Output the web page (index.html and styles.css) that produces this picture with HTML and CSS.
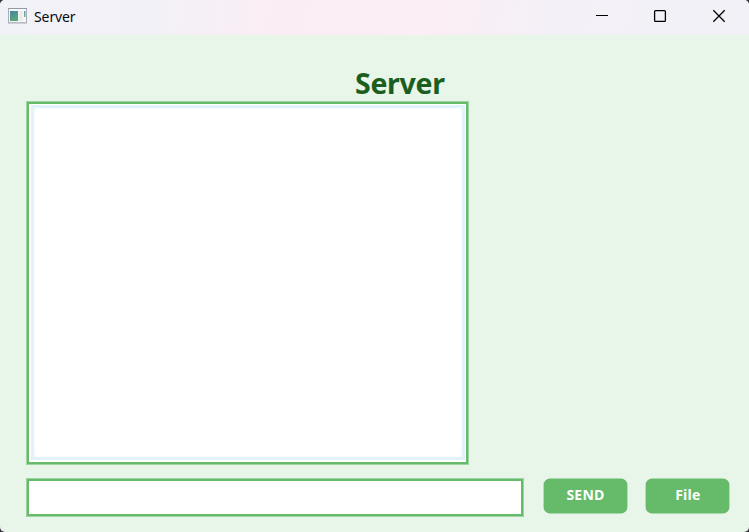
FILE: index.html
```
<!DOCTYPE html>
<html lang="en">
<head>
<meta charset="utf-8">
<title>Server</title>
<link rel="stylesheet" href="styles.css">
</head>
<body>
<div class="window">
  <header class="titlebar">
    <svg class="app-icon" width="20" height="16" viewBox="0 0 20 16">
      <defs><linearGradient id="pane" x1="0" y1="0" x2="0.4" y2="1"><stop offset="0" stop-color="#4a80a0"/><stop offset="1" stop-color="#58a878"/></linearGradient></defs>
      <rect x="0.5" y="0.5" width="18" height="14.2" fill="#f7f7f7" stroke="#a9adb5"/>
      <path d="M0 .5h19" stroke="#9299aa"/>
      <rect x="2" y="3" width="8" height="10" fill="url(#pane)"/>
      <rect x="11" y="3" width="4" height="10" fill="#ececec"/>
      <rect x="16" y="3" width="1.5" height="6" fill="url(#pane)" opacity=".85"/>
      <path d="M0 15.5h19" stroke="#cfd0d6"/>
    </svg>
    <span class="caption">Server</span>
    <svg class="controls" width="130" height="14" viewBox="0 0 130 14" fill="none" stroke="#000">
      <path d="M0 6.5h12" stroke-width="1.1"/>
      <rect x="58.6" y="1.6" width="10.8" height="10.8" rx="1" stroke-width="1.3"/>
      <path d="M117.3 1.3l11.4 11.4M128.7 1.3l-11.4 11.4" stroke-width="1.3"/>
    </svg>
  </header>
  <main class="content">
    <h1 class="heading">Server</h1>
    <div class="log"><div class="log-inner"></div></div>
    <div class="compose">
      <input class="message" type="text" aria-label="Message">
      <button class="btn">SEND</button>
      <button class="btn">File</button>
    </div>
  </main>
</div>
</body>
</html>
```
FILE: styles.css
```
* { box-sizing: border-box; }
body {
  margin: 0;
  background: #34323b;
  font-family: "Noto Sans", "Open Sans", sans-serif;
}
.window {
  width: 749px;
  height: 532px;
  overflow: hidden;
  border-radius: 5px;
  background: #e8f5e9;
}
.titlebar {
  display: flex;
  height: 35px;
  padding: 8px 0 0 8px;
  align-items: flex-start;
  background: linear-gradient(100deg, #f1f2f8 0%, #f2f1f7 20%, #faeef4 37%, #fbeef4 57%, #f4f0f7 73%, #f2f1f8 100%);
}
.app-icon { display: block; }
.caption {
  margin: -1px 0 0 6px;
  font-size: 14px;
  line-height: 20px;
  letter-spacing: -0.1px;
  color: #0a0a0a;
}
.controls {
  display: block;
  margin: 1px 23px 0 auto;
}
.content { padding: 30px 19px 0 27px; }
.heading {
  margin: 0;
  padding-left: 328px;
  font-size: 28.5px;
  line-height: 37px;
  font-weight: 700;
  letter-spacing: -0.3px;
  color: #1b5e20;
}
.log {
  width: 441px;
  height: 362px;
  padding: 1px 1px 2px 2px;
  border: 2px solid #66bb6a;
  background: #fff;
  box-shadow: 0 0 0 1px #9ed4a1;
}
.log-inner {
  height: 100%;
  border: 3px solid #e1f2f9;
  background: #fff;
  box-shadow: inset 0 0 3px #f0f3f5;
}
.compose {
  display: flex;
  align-items: flex-start;
  margin-top: 15px;
}
.message {
  width: 496px;
  height: 37px;
  margin: 0 21px 0 0;
  padding: 4px;
  border: 2px solid #66bb6a;
  border-radius: 0;
  outline: 0;
  background: #fff;
  box-shadow: 0 0 0 1px #9ed4a1;
  font: 14px "Noto Sans", sans-serif;
}
.btn {
  width: 83px;
  height: 34px;
  margin: 0 19.4px 0 0;
  padding: 0 0 2px;
  flex: none;
  border: 0;
  border-radius: 6px;
  background: #66bb6a;
  box-shadow: 0 0 0 0.4px #66bb6a;
  color: #fff;
  font: 700 14px/20px "Open Sans", sans-serif;
  letter-spacing: 0.2px;
}
.btn:last-child { margin-right: 0; }
```
